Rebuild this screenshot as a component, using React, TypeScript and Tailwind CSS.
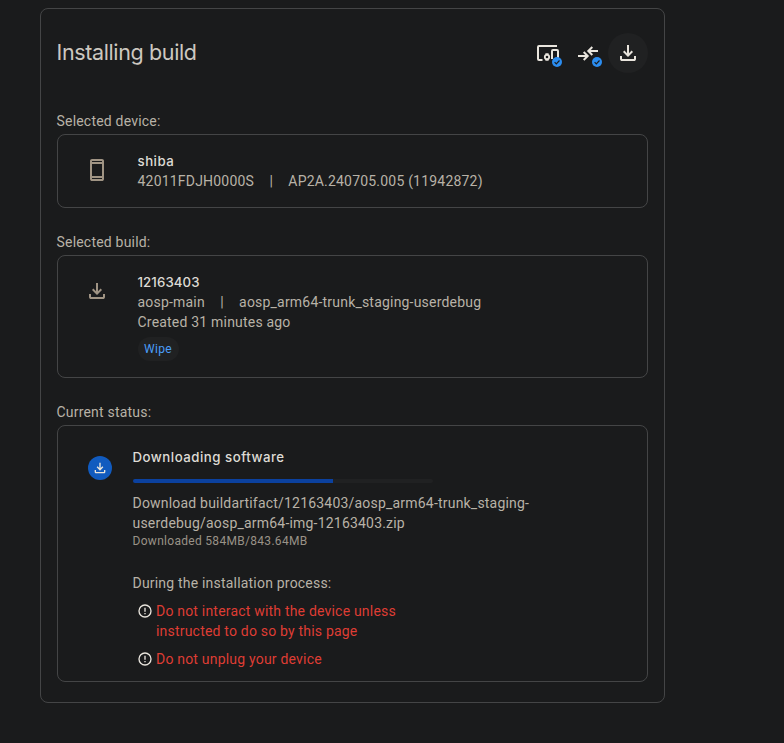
import type { ReactNode } from "react";

const title = "font-['Inter',sans-serif] font-medium text-[13.25px] text-[#dedbd5]";

function DownloadIcon({ size = 24 }: { size?: number }) {
  return (
    <svg width={size} height={size} viewBox="0 0 24 24" fill="currentColor" className="shrink-0">
      <path d="M12 16l-5-5 1.4-1.45 2.6 2.6V4h2v8.15l2.6-2.6L17 11zM6 20q-.82 0-1.41-.59T4 18v-3h2v3h12v-3h2v3q0 .83-.59 1.41T18 20z" />
    </svg>
  );
}

function PhoneIcon() {
  return (
    <svg width="24" height="24" viewBox="0 0 24 24" fill="currentColor" className="shrink-0">
      <path
        fillRule="evenodd"
        d="M7 1h10q.83 0 1.41.59T19 3v18q0 .83-.59 1.41T17 23H7q-.83 0-1.41-.59T5 21V3q0-.83.59-1.41T7 1zM7 3v1h10V3zM7 6v12h10V6zM7 20v1h10v-1z"
      />
    </svg>
  );
}

function DevicesIcon() {
  return (
    <svg width="24" height="24" viewBox="0 0 24 24" fill="none" stroke="currentColor" strokeWidth="2">
      <path d="M21 5H3q-1 0-1 1v12q0 1 1 1h3.5" />
      <path d="M16 18V10q0-1 1-1h4q1 0 1 1v8" />
      <circle cx="11" cy="16" r="2.2" strokeWidth="1.8" />
      <path d="M9.4 13.2h3.2M9.4 18.9h3.2" strokeWidth="1.7" />
    </svg>
  );
}

function ArrowsIcon() {
  return (
    <svg width="24" height="24" viewBox="0 0 24 24" fill="none" stroke="currentColor" strokeWidth="2">
      <path d="M2 15h9.5M7.7 11l4 4-4 4M22 10h-9.5M16.3 6l-4 4 4 4" />
    </svg>
  );
}

function Badge() {
  return (
    <svg width="10" height="10" viewBox="0 0 10 10" className="absolute left-6 top-6">
      <circle cx="5" cy="5" r="5" fill="#2b8df0" />
      <path d="M2.6 5.1l1.7 1.7 3.2-3.3" fill="none" stroke="#1a1b1c" strokeWidth="1.2" />
    </svg>
  );
}

function AlertIcon() {
  return (
    <svg width="16" height="16" viewBox="0 0 24 24" className="mt-0.5 shrink-0" fill="none" stroke="#e9e5dd" strokeWidth="2">
      <circle cx="12" cy="12" r="9" />
      <path d="M12 7v6M12 15v2" />
    </svg>
  );
}

function Section({ label, className, children }: { label: string; className: string; children: ReactNode }) {
  return (
    <section>
      <p className="-ml-[0.5px] mb-[3px]">{label}</p>
      <div className={`flex rounded-lg border border-[#444546] ${className}`}>{children}</div>
    </section>
  );
}

export default function App() {
  return (
    <main className="h-[743px] bg-[#1a1b1c] pl-10 pt-2 font-['Roboto',sans-serif] text-sm leading-5 tracking-[0.2px] text-[#b8b2a7]">
      <div className="h-[695px] w-[625px] rounded-lg border border-[#444546] px-4 pt-6">
        <header className="mb-[38px] flex h-10 items-center justify-between">
          <h1 className="-ml-[0.5px] pb-0.5 font-['Inter',sans-serif] text-[21.5px] leading-7 tracking-[-0.37px] text-[#cdc8c0]">Installing build</h1>
          <div className="flex text-[#e9e5dd]">
            <div className="relative flex size-10 items-center justify-center">
              <DevicesIcon />
              <Badge />
            </div>
            <div className="relative flex size-10 items-center justify-center">
              <ArrowsIcon />
              <Badge />
            </div>
            <div className="flex size-10 items-center justify-center rounded-full bg-[#202122]">
              <DownloadIcon />
            </div>
          </div>
        </header>

        <div className="flex flex-col gap-6">
          <Section label="Selected device:" className="h-[74px] gap-[28.5px] pl-[27px] pt-4">
            <div className="pt-[7px] text-[#a09484]">
              <PhoneIcon />
            </div>
            <div>
              <h2 className={`${title} tracking-[0.5px]`}>shiba</h2>
              <p className="flex">
                <span>42011FDJH0000S</span>
                <span className="mx-[15.3px]">|</span>
                <span>AP2A.240705.005 (11942872)</span>
              </p>
            </div>
          </Section>

          <Section label="Selected build:" className="h-[123px] gap-[28.5px] pl-[27px] pt-4">
            <div className="pt-[7px] text-[#a09484]">
              <DownloadIcon />
            </div>
            <div>
              <h2 className={`${title} tracking-[0.1px]`}>12163403</h2>
              <p className="flex">
                <span>aosp-main</span>
                <span className="mx-[15.3px]">|</span>
                <span>aosp_arm64-trunk_staging-userdebug</span>
              </p>
              <p>Created 31 minutes ago</p>
              <span className="mt-[5px] flex h-6 w-[41px] items-center justify-center rounded-full bg-[#202122] text-xs tracking-[0.3px] text-[#4a9df8]">
                Wipe
              </span>
            </div>
          </Section>

          <Section label="Current status:" className="h-[257px] gap-[20.5px] pl-[30px] pt-[21px]">
            <div className="mt-[9px] flex size-6 shrink-0 items-center justify-center rounded-full bg-[#115bbf] text-[#e9e5dd]">
              <DownloadIcon size={16} />
            </div>
            <div>
              <h2 className={`${title} tracking-[0.5px]`}>Downloading software</h2>
              <div className="mt-3 h-1 w-[300px] overflow-hidden rounded-full bg-[#202122]">
                <div className="h-full w-[200px] bg-[#0b419f]" />
              </div>
              <p className="mt-2.5 w-[410px]">
                Download buildartifact/12163403/aosp_arm64-trunk_staging-
                <br />
                userdebug/aosp_arm64-img-12163403.zip
              </p>
              <p className="text-xs leading-4 tracking-[0.3px] text-[#999287]">Downloaded 584MB/843.64MB</p>
              <p className="mt-6">During the installation process:</p>
              <ul className="mt-2 flex w-[290px] flex-col gap-2 pl-[4.5px] text-[#df3d34]">
                <li className="flex gap-[3px]">
                  <AlertIcon />
                  <span>Do not interact with the device unless instructed to do so by this page</span>
                </li>
                <li className="flex gap-[3px]">
                  <AlertIcon />
                  <span>Do not unplug your device</span>
                </li>
              </ul>
            </div>
          </Section>
        </div>
      </div>
    </main>
  );
}
